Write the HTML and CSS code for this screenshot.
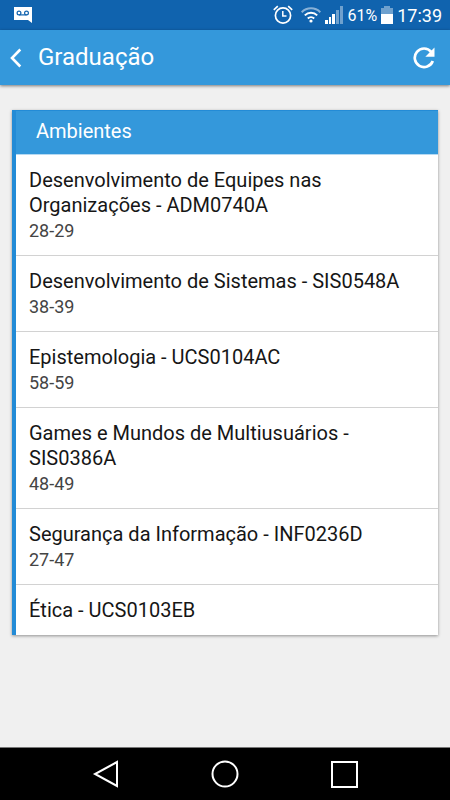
FILE: index.html
```html
<!DOCTYPE html>
<html lang="pt-BR">
<head>
<meta charset="utf-8">
<meta name="viewport" content="width=device-width, initial-scale=1">
<title>Graduação</title>
<link rel="stylesheet" href="styles.css">
</head>
<body>
<div class="status">
  <svg class="voicemail" width="18" height="16" viewBox="0 0 18 16" aria-hidden="true">
    <path d="M0 0h18v16l-4-3H0z" fill="#fff"/>
    <g fill="none" stroke="#1263ae" stroke-width="1.2"><circle cx="5" cy="6" r="1.9"/><circle cx="12.5" cy="6" r="1.9"/><path d="M5 7.9h7.5"/></g>
  </svg>
  <div class="indicators">
    <svg width="20" height="20" viewBox="0 0 20 20" fill="none" stroke="#fff" aria-hidden="true">
      <circle cx="10" cy="10.5" r="7.6" stroke-width="1.7"/>
      <path d="M9.8 6v5h3.7" stroke-width="1.5"/>
      <path d="M.8 4.8 4.8 1.2M15.2 1.2l4 3.6" stroke-width="1.7"/>
    </svg>
    <svg class="wifi" width="20" height="16" viewBox="0 0 20 16" fill="none" stroke="#fff" stroke-width="2" aria-hidden="true">
      <path d="M.7 5.2a13 13 0 0 1 18.6 0" opacity=".5"/>
      <path d="M3.8 8.4a8.8 8.8 0 0 1 12.4 0M6.8 11.5a4.6 4.6 0 0 1 6.4 0"/>
      <circle cx="10" cy="14" r="1.6" fill="#fff" stroke="none"/>
    </svg>
    <svg class="signal" width="18" height="18" viewBox="0 0 18 18" fill="#fff" aria-hidden="true">
      <path d="M0 14h3v4H0zM4 11h2v7H4zM7 8h3v10H7z"/>
      <path d="M11 4h3v14h-3zM15 0h3v18h-3z" opacity=".4"/>
    </svg>
    <span class="percent">61%</span>
    <svg class="battery" width="12" height="18" viewBox="0 0 12 18" fill="#fff" aria-hidden="true">
      <path d="M3 0h6v2h3v6H0V2h3z" opacity=".4"/>
      <path d="M0 8h12v10H0z"/>
    </svg>
    <time class="clock">17:39</time>
  </div>
</div>
<header class="appbar">
  <button class="icon-button" type="button" aria-label="Voltar">
    <svg width="12" height="20" viewBox="0 0 12 20" fill="none" stroke="#fff" stroke-width="2.6"><path d="M10.3 1.5 2 10l8.3 8.5"/></svg>
  </button>
  <h1 class="title">Graduação</h1>
  <button class="icon-button" type="button" aria-label="Atualizar">
    <svg width="22" height="22" viewBox="0 0 22 22"><path d="M18.2 4.8A9.3 9.3 0 1 0 19.8 14" fill="none" stroke="#fff" stroke-width="2.7"/><path d="M21.5 .5v9.2h-9.2z" fill="#fff"/></svg>
  </button>
</header>
<main class="content">
  <section class="card">
    <h2 class="card-title">Ambientes</h2>
    <ul class="list">
      <li><a class="item" href="#"><span class="name">Desenvolvimento de Equipes nas Organizações - ADM0740A</span><span class="code">28-29</span></a></li>
      <li><a class="item" href="#"><span class="name">Desenvolvimento de Sistemas - SIS0548A</span><span class="code">38-39</span></a></li>
      <li><a class="item" href="#"><span class="name">Epistemologia - UCS0104AC</span><span class="code">58-59</span></a></li>
      <li><a class="item" href="#"><span class="name">Games e Mundos de Multiusuários - SIS0386A</span><span class="code">48-49</span></a></li>
      <li><a class="item" href="#"><span class="name">Segurança da Informação - INF0236D</span><span class="code">27-47</span></a></li>
      <li><a class="item" href="#"><span class="name">Ética - UCS0103EB</span></a></li>
    </ul>
  </section>
</main>
<nav class="navbar" aria-label="Sistema">
  <button class="icon-button" type="button" aria-label="Voltar à tela anterior">
    <svg width="28" height="28" viewBox="0 0 28 28" fill="none" stroke="#fff" stroke-width="2"><path d="M25 2v24L3 14z"/></svg>
  </button>
  <button class="icon-button" type="button" aria-label="Início">
    <svg width="28" height="28" viewBox="0 0 28 28" fill="none" stroke="#fff" stroke-width="2"><circle cx="14" cy="14" r="12.5"/></svg>
  </button>
  <button class="icon-button" type="button" aria-label="Recentes">
    <svg width="28" height="28" viewBox="0 0 28 28" fill="none" stroke="#fff" stroke-width="2"><path d="M2 2h25v25H2z"/></svg>
  </button>
</nav>
</body>
</html>
```
FILE: styles.css
```css
* {
  box-sizing: border-box;
}

body {
  display: flex;
  flex-direction: column;
  min-height: 100vh;
  margin: 0;
  background: #f0f0f0;
  color: #161616;
  font-family: Roboto, "Liberation Sans", sans-serif;
}

svg {
  display: block;
  flex: none;
}

.status {
  display: flex;
  align-items: center;
  justify-content: space-between;
  height: 30px;
  padding: 0 8px 0 14px;
  background: #1063ae;
  color: #fff;
}

.indicators {
  display: flex;
  align-items: center;
  gap: 4px;
}

.wifi {
  margin: 0 0 0 4px;
}

.percent {
  font-size: 16px;
}

.clock {
  font-size: 18px;
}

.appbar {
  display: flex;
  align-items: center;
  height: 55px;
  padding: 0 15px 0 10px;
  background: #3498db;
  box-shadow: 0 1px 3px rgba(0, 0, 0, 0.5);
  color: #fff;
}

.icon-button {
  padding: 0;
  border: 0;
  background: none;
  cursor: pointer;
}

.title {
  flex: 1;
  margin: 0 16px;
  padding-bottom: 2px;
  font-size: 24px;
  font-weight: 400;
}

.content {
  flex: 1;
  padding: 25px 12px;
}

.card {
  border-left: 4px solid #238bd6;
  background: #fff;
  box-shadow: 0 1px 3px rgba(0, 0, 0, 0.4);
}

.card-title {
  margin: 0;
  padding: 0 20px 3px;
  border-top: 1px solid #238bd6;
  background: #3498db;
  color: #fff;
  font-size: 20px;
  font-weight: 400;
  line-height: 40px;
}

.list {
  margin: 0;
  padding: 0;
  list-style: none;
}

.item {
  display: block;
  padding: 13px 12px 12px 13px;
  color: inherit;
  text-decoration: none;
}

li + li {
  border-top: 1px solid #d2d2d2;
}

li:first-child {
  border-top: 1px solid #b5d9f2;
}

.name,
.code {
  display: block;
  line-height: 25px;
}

.name {
  font-size: 20px;
}

.code {
  color: #444;
  font-size: 18px;
}

.navbar {
  display: flex;
  align-items: center;
  justify-content: center;
  gap: 91px;
  height: 53px;
  border-top: 1px solid #777;
  background: #000;
}
```
